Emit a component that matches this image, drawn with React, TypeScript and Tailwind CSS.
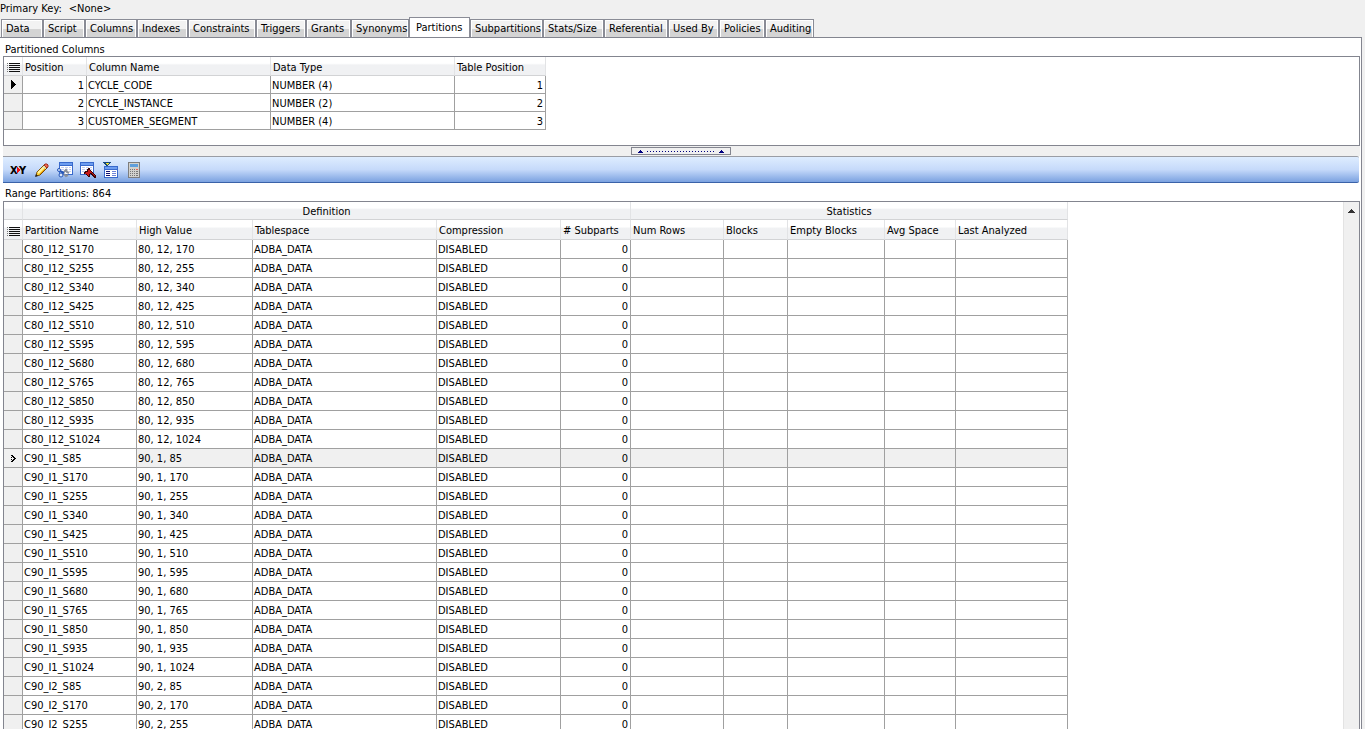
import clsx from "clsx";

const tabs = [
  { name: "Data", width: "w-[42px]" },
  { name: "Script", width: "w-[42px]" },
  { name: "Columns", width: "w-[52px]" },
  { name: "Indexes", width: "w-[51px]" },
  { name: "Constraints", width: "w-[68px]" },
  { name: "Triggers", width: "w-[50px]" },
  { name: "Grants", width: "w-[45px]" },
  { name: "Synonyms", width: "w-[58px]" },
  { name: "Partitions", width: "w-[61px]" },
  { name: "Subpartitions", width: "w-[73px]" },
  { name: "Stats/Size", width: "w-[61px]" },
  { name: "Referential", width: "w-[64px]" },
  { name: "Used By", width: "w-[51px]" },
  { name: "Policies", width: "w-[46px]" },
  { name: "Auditing", width: "w-[49px]" },
];

const keyColumns = [
  { position: 1, name: "CYCLE_CODE", type: "NUMBER (4)", tablePosition: 1 },
  { position: 2, name: "CYCLE_INSTANCE", type: "NUMBER (2)", tablePosition: 2 },
  { position: 3, name: "CUSTOMER_SEGMENT", type: "NUMBER (4)", tablePosition: 3 },
];

const segments = [85, 170, 255, 340, 425, 510, 595, 680, 765, 850, 935, 1024];

const makePartitions = (cycle: number, instance: number, values: number[]) =>
  values.map((s) => ({ name: `C${cycle}_I${instance}_S${s}`, high: `${cycle}, ${instance}, ${s}` }));

const partitions = [
  ...makePartitions(80, 12, segments.slice(1)),
  ...makePartitions(90, 1, segments),
  ...makePartitions(90, 2, segments.slice(0, 3)),
];

const currentPartition = "C90_I1_S85";

const headBase =
  "border-b border-r border-b-[#d2d3d5] border-r-[#e2e3e5] bg-linear-to-b from-white from-35% to-[#f0f1f3] to-45% p-0 font-normal";
const headCell = clsx(headBase, "pt-[3px] pl-[2px] text-left");
const groupCell = clsx(headBase, "pt-[2px] text-center");
const bodyCell = "border-b border-r border-[#a0a0a0] p-0 pt-[2px] pl-px";
const markCell = "border-b border-r border-[#a0a0a0] bg-[#f0f0f0] p-0";

function ListIcon() {
  return (
    <svg width="14" height="9" viewBox="0 0 14 9" shapeRendering="crispEdges" className="ml-px block" aria-hidden="true">
      <path d="M2 0h11v1H2zM2 2h11v1H2zM2 4h11v1H2zM2 6h11v1H2zM2 8h11v1H2z" fill="#111" />
      <path d="M0 0h1v1H0zM0 2h1v1H0zM0 4h1v1H0zM0 6h1v1H0zM0 8h1v1H0z" fill="#777" />
    </svg>
  );
}

function RenameIcon() {
  return (
    <svg width="18" height="16" viewBox="0 0 18 16" aria-hidden="true">
      <text x="0" y="12" fontSize="11" fontWeight="bold" fill="#000">X</text>
      <text x="9" y="12" fontSize="11" fontWeight="bold" fill="#000">Y</text>
      <path d="M7 5h1v1h1v1h1v2H9v1H8v1H7z" fill="#f01010" shapeRendering="crispEdges" />
    </svg>
  );
}

function PencilIcon() {
  return (
    <svg width="16" height="16" viewBox="0 0 16 16" aria-hidden="true">
      <path d="M2 14l1-4 7-7 3 3-7 7z" fill="#ffd633" stroke="#7a4a00" />
      <path d="M4 11l7-7" stroke="#fff3a0" strokeWidth="2" />
      <path d="M6 12l6-6" stroke="#e89a10" />
      <path d="M10 3l1-1h2l1 1v2l-1 1z" fill="#ef6b5a" stroke="#a03020" />
      <path d="M9 4l3 3" stroke="#c8d0dc" />
      <path d="M1 15l1-3 2 2z" fill="#222" />
    </svg>
  );
}

function GridGlyph({ x, y }: { x: number; y: number }) {
  return (
    <g transform={`translate(${x} ${y})`}>
      <path d="M0 0h14v13H0z" fill="#3869cc" />
      <path d="M1 1h12v2H1z" fill="#6d9df0" />
      <path d="M1 4h12v8H1z" fill="#fff" />
      <path d="M2 5h3v1H2zM6 5h3v1H6zM10 5h2v1h-2zM2 7h3v1H2zM6 7h3v1H6zM10 7h2v1h-2zM2 9h3v1H2zM6 9h3v1H6zM10 9h2v1h-2z" fill="#c3cdf2" />
    </g>
  );
}

function SplitIcon() {
  return (
    <svg width="16" height="16" viewBox="0 0 16 16" shapeRendering="crispEdges" aria-hidden="true">
      <GridGlyph x={2} y={0} />
      <g shapeRendering="auto" fill="none">
        <path d="M3 9l4 2M5 12l2-2" stroke="#2456b8" strokeWidth="2" />
        <circle cx="2" cy="8" r="1.5" fill="#dce8fb" stroke="#2456b8" />
        <circle cx="4" cy="13" r="2" fill="#dce8fb" stroke="#2456b8" />
        <path d="M7 10l2-2 1 2 2 1M7 12l2 2 2-1" stroke="#8a909a" strokeWidth="2" />
      </g>
    </svg>
  );
}

function DropIcon() {
  return (
    <svg width="16" height="16" viewBox="0 0 16 16" shapeRendering="crispEdges" aria-hidden="true">
      <GridGlyph x={0} y={0} />
      <path d="M8 6h2v2h1v1h1v1h1v1h1v1h1v1h1v3h-2v-1h-1v-1h-1v-1h-1v-1h-1v3H8v-1H7v-1H6v-1H4v-2h1V9h2V7h1z" fill="#3a0505" />
      <path d="M8 8h2v1h1v1h1v1h1v1h1v1h1v1h-1v-1h-1v-1h-1v-1h-2v1h-1v2H8v-1H7v-1H5v-1h1v-1h2z" fill="#c81818" />
    </svg>
  );
}

function TruncateIcon() {
  return (
    <svg width="16" height="16" viewBox="0 0 16 16" shapeRendering="crispEdges" aria-hidden="true">
      <path d="M0 0h8v1H7v1H6v1H5v1H3V3H2V2H1V1H0z" fill="#14477c" />
      <path d="M3 1h3v1H5v1H4V2H3z" fill="#f4e430" />
      <path d="M1 4h14v12H1z" fill="#3869cc" />
      <path d="M2 5h12v2H2z" fill="#6d9df0" />
      <path d="M2 8h12v7H2z" fill="#fff" />
      <path d="M3 9h4v1H3zM3 11h4v1H3zM3 13h4v1H3z" fill="#101070" />
      <path d="M9 9h4v1H9zM9 11h4v1H9zM9 13h4v1H9z" fill="#6c83d8" />
    </svg>
  );
}

function CalculatorIcon() {
  return (
    <svg width="12" height="16" viewBox="0 0 12 16" shapeRendering="crispEdges" aria-hidden="true">
      <path d="M0 0h12v16H0z" fill="#7d7d7d" />
      <path d="M1 1h10v14H1z" fill="#d2d2ce" />
      <path d="M2 2h8v3H2z" fill="#5f9fdc" />
      <path d="M2 7h1v1H2zM4 7h1v1H4zM6 7h1v1H6zM2 9h1v1H2zM4 9h1v1H4zM6 9h1v1H6zM8 9h2v1H8zM2 11h1v1H2zM4 11h1v1H4zM6 11h1v1H6zM8 11h2v1H8zM2 13h1v1H2zM4 13h1v1H4zM6 13h1v1H6zM8 13h2v1H8z" fill="#777" />
      <path d="M8 7h2v1H8z" fill="#f06050" />
    </svg>
  );
}

const tools = [
  { label: "Rename partition", icon: RenameIcon },
  { label: "Edit partition", icon: PencilIcon },
  { label: "Split partition", icon: SplitIcon },
  { label: "Drop partition", icon: DropIcon },
  { label: "Truncate partition", icon: TruncateIcon },
  { label: "Analyze partition", icon: CalculatorIcon },
];

function TabStrip() {
  return (
    <div role="tablist" className="flex h-[20px] items-end pl-px">
      {tabs.map((tab) => {
        const active = tab.name === "Partitions";
        return (
          <button
            key={tab.name}
            type="button"
            role="tab"
            aria-selected={active}
            className={clsx(
              "shrink-0 whitespace-nowrap border-x border-t border-[#8a8c96] text-left",
              tab.width,
              active
                ? "-mb-px h-[21px] bg-white pl-[6px]"
                : "h-[18px] bg-linear-to-b from-[#f2f2f2] from-50% to-[#d4d4d4] to-50% pt-px pl-[4px] shadow-[inset_1px_1px_0_#fff,inset_-1px_0_0_#fff]"
            )}
          >
            {tab.name}
          </button>
        );
      })}
    </div>
  );
}

function KeyColumnsTable() {
  return (
    <div className="h-[90px] border border-[#83858f] bg-white">
      <table aria-label="Partitioned Columns" className="w-[542px] table-fixed border-separate border-spacing-0">
        <colgroup>
          <col className="w-[19px]" />
          <col className="w-[64px]" />
          <col className="w-[184px]" />
          <col className="w-[184px]" />
          <col className="w-[91px]" />
        </colgroup>
        <thead>
          <tr className="h-[19px]">
            <th className={headCell}><ListIcon /></th>
            <th className={headCell}>Position</th>
            <th className={headCell}>Column Name</th>
            <th className={headCell}>Data Type</th>
            <th className={headCell}>Table Position</th>
          </tr>
        </thead>
        <tbody>
          {keyColumns.map((col, i) => (
            <tr key={col.name} className="h-[18px]">
              <td className={markCell}>
                {i === 0 && (
                  <svg width="5" height="9" viewBox="0 0 5 9" shapeRendering="crispEdges" className="mx-auto block" aria-hidden="true">
                    <path d="M0 0h1v1h1v1h1v1h1v1h1v1H4v1H3v1H2v1H1v1H0z" fill="#000" />
                  </svg>
                )}
              </td>
              <td className={clsx(bodyCell, "pr-[2px] text-right")}>{col.position}</td>
              <td className={bodyCell}>{col.name}</td>
              <td className={bodyCell}>{col.type}</td>
              <td className={clsx(bodyCell, "pr-[2px] text-right")}>{col.tablePosition}</td>
            </tr>
          ))}
        </tbody>
      </table>
    </div>
  );
}

function Splitter() {
  return (
    <div className="flex h-[10px] justify-center bg-[#f0f0f0] pt-px pr-[2px]">
      <button
        type="button"
        aria-label="Collapse upper panel"
        className="flex h-[8px] w-[100px] items-center justify-between border border-[#83858f] px-[6px]"
      >
        <svg width="5" height="3" viewBox="0 0 5 3" shapeRendering="crispEdges" aria-hidden="true">
          <path d="M2 0h1v1h1v1h1v1H0V2h1V1h1z" fill="#000080" />
        </svg>
        <span className="h-px w-[68px] bg-[repeating-linear-gradient(90deg,#000080_0_1px,transparent_1px_3px)]" />
        <svg width="5" height="3" viewBox="0 0 5 3" shapeRendering="crispEdges" aria-hidden="true">
          <path d="M2 0h1v1h1v1h1v1H0V2h1V1h1z" fill="#000080" />
        </svg>
      </button>
    </div>
  );
}

function Toolbar() {
  return (
    <div
      role="toolbar"
      aria-label="Partition tools"
      className="mr-px flex h-[27px] items-center rounded-r-xs border-t border-b border-t-[#9a9da5] border-b-[#3a62a8] bg-linear-to-b from-[#deedff] via-[#c6dafa] via-50% to-[#7ba2e0] pl-[4px]"
    >
      {tools.map((tool) => (
        <button key={tool.label} type="button" aria-label={tool.label} className="flex h-[22px] w-[23px] items-center justify-center">
          <tool.icon />
        </button>
      ))}
    </div>
  );
}

function PartitionsTable() {
  return (
    <div className="flex min-h-0 flex-1 overflow-hidden border border-b-0 border-[#83858f] bg-white">
      <div className="min-w-0 flex-1 overflow-hidden">
        <table aria-label="Range Partitions" className="w-[1064px] table-fixed border-separate border-spacing-0">
          <colgroup>
            <col className="w-[19px]" />
            <col className="w-[114px]" />
            <col className="w-[116px]" />
            <col className="w-[184px]" />
            <col className="w-[124px]" />
            <col className="w-[70px]" />
            <col className="w-[93px]" />
            <col className="w-[64px]" />
            <col className="w-[97px]" />
            <col className="w-[71px]" />
            <col className="w-[112px]" />
          </colgroup>
          <thead>
            <tr className="h-[18px]">
              <td className={groupCell} />
              <th colSpan={5} scope="colgroup" className={groupCell}>Definition</th>
              <th colSpan={5} scope="colgroup" className={groupCell}>Statistics</th>
            </tr>
            <tr className="h-[20px]">
              <th className={headCell}><ListIcon /></th>
              <th className={headCell}>Partition Name</th>
              <th className={headCell}>High Value</th>
              <th className={headCell}>Tablespace</th>
              <th className={headCell}>Compression</th>
              <th className={headCell}># Subparts</th>
              <th className={headCell}>Num Rows</th>
              <th className={headCell}>Blocks</th>
              <th className={headCell}>Empty Blocks</th>
              <th className={headCell}>Avg Space</th>
              <th className={headCell}>Last Analyzed</th>
            </tr>
          </thead>
          <tbody>
            {partitions.map((part) => {
              const current = part.name === currentPartition;
              const cell = clsx(bodyCell, current && "bg-[#f0f0f0]");
              return (
                <tr key={part.name} className="h-[19px]">
                  <td className={markCell}>
                    {current && (
                      <svg width="5" height="7" viewBox="0 0 5 7" shapeRendering="crispEdges" className="mx-auto block" aria-hidden="true">
                        <path d="M0 0h2v1h1v1h1v1h1v1H4v1H3v1H2v1H0V6h1V5h1V4h1V3H2V2H1V1H0zM0 2h1v1H0zM0 4h1v1H0z" fill="#000" />
                      </svg>
                    )}
                  </td>
                  <td className={bodyCell}>{part.name}</td>
                  <td className={cell}>{part.high}</td>
                  <td className={cell}>ADBA_DATA</td>
                  <td className={cell}>DISABLED</td>
                  <td className={clsx(cell, "pr-[2px] text-right")}>0</td>
                  <td className={cell} />
                  <td className={cell} />
                  <td className={cell} />
                  <td className={cell} />
                  <td className={cell} />
                </tr>
              );
            })}
          </tbody>
        </table>
      </div>
      <div className="w-[16px] shrink-0 border-l border-[#e3e3e3] bg-[#f0f0f0]">
        <button type="button" aria-label="Scroll up" className="flex h-[17px] w-full items-center justify-center">
          <svg width="7" height="4" viewBox="0 0 7 4" shapeRendering="crispEdges" aria-hidden="true">
            <path d="M3 0h1v1h1v1h1v1h1v1H0V3h1V2h1V1h1z" fill="#333" />
          </svg>
        </button>
      </div>
    </div>
  );
}

export default function App() {
  return (
    <div className="flex h-screen flex-col overflow-hidden bg-[#f0f0f0] font-['DejaVu_Sans_Condensed','DejaVu_Sans',sans-serif] text-[11px] leading-[14px] text-black">
      <div className="flex h-[17px] gap-[7px] pt-[2px]">
        <span>Primary Key:</span>
        <span>&lt;None&gt;</span>
      </div>
      <TabStrip />
      <main className="mr-[3px] flex min-h-0 flex-1 flex-col border-t border-r border-[#83858f] bg-white pr-px pl-[3px]">
        <h2 className="h-[18px] pt-[5px] pl-[2px]">Partitioned Columns</h2>
        <KeyColumnsTable />
        <Splitter />
        <Toolbar />
        <p className="h-[18px] pt-[4px] pl-[2px]">Range Partitions: 864</p>
        <PartitionsTable />
      </main>
    </div>
  );
}
